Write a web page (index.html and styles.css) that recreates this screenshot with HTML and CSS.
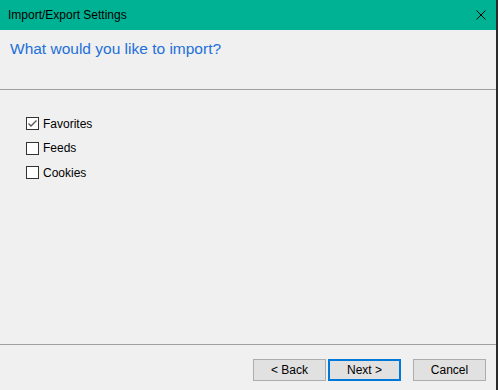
FILE: index.html
```html
<!DOCTYPE html>
<html lang="en">

<head>
    <meta charset="UTF-8">
    <title>Import/Export Settings</title>
    <link rel="stylesheet" href="styles.css">
</head>

<body>
    <div class="window">
        <div class="title_bar">
            <span class="title">Import/Export Settings</span>
            <svg class="close" width="10" height="10" viewBox="0 0 10 10">
                <path d="M0.5 0.5 L9.5 9.5 M9.5 0.5 L0.5 9.5" stroke="#000" stroke-width="1" fill="none" />
            </svg>
        </div>
        <div class="header">
            <h1>What would you like to import?</h1>
        </div>
        <div class="content">
            <label class="check">
                <span class="box checked">
                    <svg width="11" height="11" viewBox="0 0 11 11">
                        <path d="M1.5 5.5 L4 8 L9.5 2.5" stroke="#555" stroke-width="1.4" fill="none" />
                    </svg>
                </span>
                Favorites
            </label>
            <label class="check"><span class="box"></span>Feeds</label>
            <label class="check"><span class="box"></span>Cookies</label>
        </div>
        <div class="footer">
            <button class="btn">&lt; Back</button>
            <button class="btn btn_default">Next &gt;</button>
            <button class="btn btn_cancel">Cancel</button>
        </div>
    </div>
</body>

</html>
```

FILE: styles.css
```css
* {
    margin: 0;
    padding: 0;
    box-sizing: border-box;
}

body {
    background-color: #f0f0f0;
    font-family: "Liberation Sans", Arial, sans-serif;
    font-size: 12px;
    color: #000;
}

.window {
    width: 498px;
    height: 390px;
    display: flex;
    flex-direction: column;
    border-right: 2px solid #2b2b2b;
    background-color: #f0f0f0;
}

.title_bar {
    height: 30px;
    background-color: #00b294;
    display: flex;
    align-items: center;
    justify-content: space-between;
    padding: 0 10px 0 8px;
}

.title {
    font-size: 12px;
}

.header {
    height: 60px;
    padding: 10px 0 0 10px;
    border-bottom: 1px solid #a0a0a0;
}

.header h1 {
    font-weight: normal;
    font-size: 15.5px;
    color: #1e6fd9;
}

.content {
    flex: 1;
    display: flex;
    flex-direction: column;
    gap: 11.5px;
    padding: 27px 0 0 26px;
    border-bottom: 1px solid #a0a0a0;
}

.check {
    display: flex;
    align-items: center;
    gap: 4px;
    height: 13px;
}

.box {
    width: 13px;
    height: 13px;
    border: 1px solid #333;
    background-color: #fff;
    display: flex;
    align-items: center;
    justify-content: center;
}

.footer {
    height: 45px;
    display: flex;
    align-items: flex-start;
    padding: 14px 0 0 253px;
}

.btn {
    width: 73px;
    height: 22px;
    border: 1px solid #adadad;
    background-color: #e1e1e1;
    font-family: "Liberation Sans", Arial, sans-serif;
    font-size: 12px;
    color: #000;
    margin-right: 2px;
}

.btn_default {
    border: 2px solid #0078d7;
}

.btn_cancel {
    margin-left: 10px;
}
```
